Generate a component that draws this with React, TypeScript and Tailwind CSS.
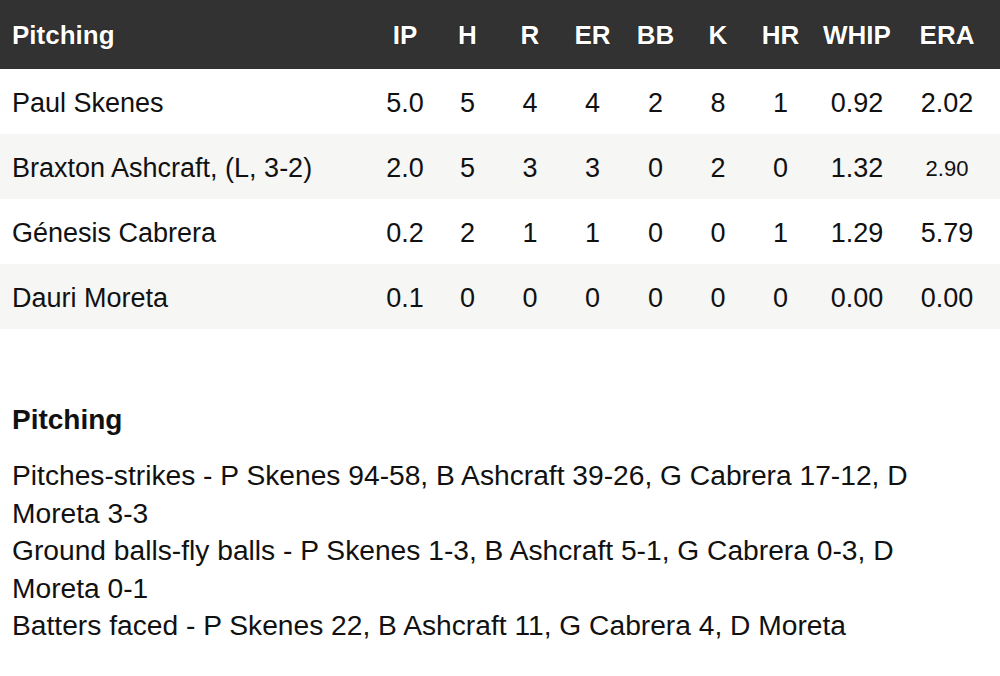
const cols = ["IP", "H", "R", "ER", "BB", "K", "HR", "WHIP", "ERA"];
const widths = ["w-[62px]", "w-[63px]", "w-[62px]", "w-[63px]", "w-[63px]", "w-[62px]", "w-[63px]", "w-[90px]", "w-[90px]"];

const rows = [
  { name: "Paul Skenes", stats: ["5.0", "5", "4", "4", "2", "8", "1", "0.92", "2.02"] },
  { name: "Braxton Ashcraft, (L, 3-2)", stats: ["2.0", "5", "3", "3", "0", "2", "0", "1.32", "2.90"] },
  { name: "Génesis Cabrera", stats: ["0.2", "2", "1", "1", "0", "0", "1", "1.29", "5.79"] },
  { name: "Dauri Moreta", stats: ["0.1", "0", "0", "0", "0", "0", "0", "0.00", "0.00"] },
];

export default function App() {
  return (
    <div className="w-[1000px] h-[676px] bg-white text-[#111] font-['Liberation_Sans',Arial,sans-serif] overflow-hidden">
      {/* table */}
      <div className="flex items-center h-[69px] bg-[#323232] text-white font-bold text-[26px] pr-[8px] pt-[2px] [text-shadow:0_0_1px_#000]">
        <div className="flex-1 pl-[12px]">Pitching</div>
        {cols.map((c, i) => (
          <div key={c} className={`${widths[i]} text-center`}>
            {c}
          </div>
        ))}
      </div>
      {rows.map((r, idx) => (
        <div
          key={r.name}
          className={`flex items-center h-[65px] text-[27px] pr-[8px] pt-[3px] ${idx % 2 === 1 ? "bg-[#f6f6f5]" : "bg-white"}`}
        >
          <div className="flex-1 pl-[12px] whitespace-nowrap">{r.name}</div>
          {r.stats.map((s, i) => (
            <div
              key={i}
              className={`${widths[i]} text-center ${idx === 1 && i === 8 ? "text-[22px]" : ""}`}
            >
              {s}
            </div>
          ))}
        </div>
      ))}

      {/* notes */}
      <div className="px-[12px] pt-[76px]">
        <div className="font-bold text-[28px] leading-[30px]">Pitching</div>
        <div className="mt-[22px] w-[960px] text-[28.2px] leading-[37.5px]">
          <div>Pitches-strikes - P Skenes 94-58, B Ashcraft 39-26, G Cabrera 17-12, D Moreta 3-3</div>
          <div>Ground balls-fly balls - P Skenes 1-3, B Ashcraft 5-1, G Cabrera 0-3, D Moreta 0-1</div>
          <div>Batters faced - P Skenes 22, B Ashcraft 11, G Cabrera 4, D Moreta</div>
        </div>
      </div>
    </div>
  );
}
